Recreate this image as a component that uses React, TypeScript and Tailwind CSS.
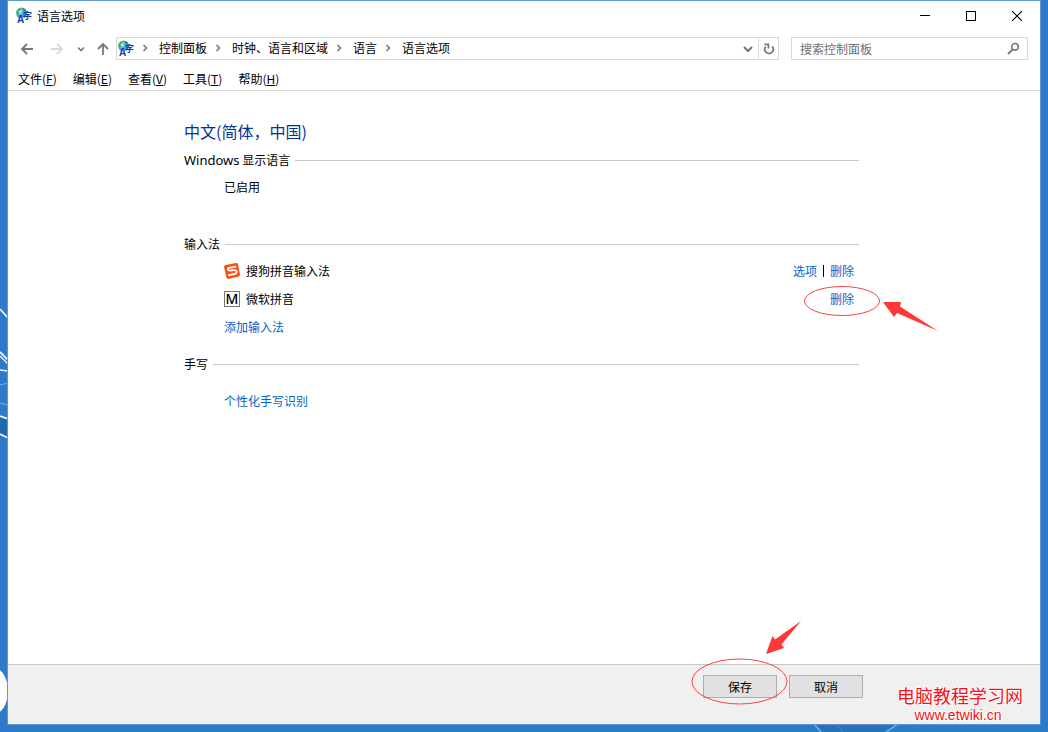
import type { ReactNode } from "react";

const crumbs = ["控制面板", "时钟、语言和区域", "语言", "语言选项"];

const menus = [
  { label: "文件", hotkey: "F" },
  { label: "编辑", hotkey: "E" },
  { label: "查看", hotkey: "V" },
  { label: "工具", hotkey: "T" },
  { label: "帮助", hotkey: "H" },
];

function LanguageIcon() {
  return (
    <svg viewBox="0 0 18 20" className="w-[18px] h-5 shrink-0 overflow-visible" aria-hidden="true">
      <defs>
        <radialGradient id="globe" cx="0.3" cy="0.35" r="0.75">
          <stop offset="0" stopColor="#e4f8fc" />
          <stop offset="0.45" stopColor="#58b4de" />
          <stop offset="1" stopColor="#1a5fb4" />
        </radialGradient>
      </defs>
      <circle cx="6.5" cy="7" r="5.5" fill="url(#globe)" />
      <path d="M1.4 6 Q2.8 2 6 2 L5.5 4 L3.6 5.4 L4.2 7.6 L2.6 9.6 Z" fill="#3fb05a" />
      <path d="M7.4 2 L10.6 3.4 L10.2 5.4 L8 4.8 Z" fill="#2f9a4c" />
      <path d="M5.4 9 L1.6 17.5 H9.4 L12 14 Z" fill="#fff" fillOpacity="0.8" />
      <text x="2" y="17.4" fontSize="10" fontWeight="bold" fill="#1438b0" fontFamily="Liberation Sans, sans-serif">A</text>
      <text x="8" y="13" fontSize="9" fontWeight="bold" fill="#1438b0" fontFamily="Noto Sans CJK SC, sans-serif">字</text>
    </svg>
  );
}

function SogouIcon() {
  return (
    <svg viewBox="0 0 16 16" className="w-4 h-4 shrink-0" aria-hidden="true">
      <path d="M1.6 2 L12.2 0.1 Q13.6 0 14 1.3 L16 11.7 Q16.1 13 14.8 13.5 L4.4 15.9 Q2.8 16 2.4 14.6 L0.1 4.2 Q0 2.5 1.6 2 Z" fill="#fb4f14" />
      <path d="M12.2 3.7 L6 4.6 Q3.5 5 3.8 6.4 Q4.1 7.7 6.3 7.5 L9.8 7.2 Q12.4 7.1 12.6 8.7 Q12.7 10.5 10.4 11 L4 12.3" fill="none" stroke="#fff" strokeWidth="1.8" />
    </svg>
  );
}

function Chevron({ down = false }: { down?: boolean }) {
  return (
    <svg viewBox="0 0 10 10" className="w-[10px] h-[10px]" fill="none" stroke="#777" strokeWidth="1.6" aria-hidden="true">
      <path d={down ? "M2 3.5 L5 6.5 L8 3.5" : "M3.5 2 L6.5 5 L3.5 8"} />
    </svg>
  );
}

function SectionTitle({ children }: { children: ReactNode }) {
  return (
    <div className="flex items-center gap-[5px] h-5">
      <h2>{children}</h2>
      <div className="flex-1 h-px bg-[#cbcbcb]" />
    </div>
  );
}

function Link({ children }: { children: ReactNode }) {
  return (
    <a href="#" className="text-[#0066cc] hover:underline">
      {children}
    </a>
  );
}

function TitleBar() {
  return (
    <header className="flex items-center justify-between h-[29px] pl-[7px]">
      <div className="flex items-center gap-1">
        <LanguageIcon />
        <h1>语言选项</h1>
      </div>
      <div className="flex h-full">
        <button aria-label="最小化" className="w-[46px] flex items-center justify-center">
          <svg viewBox="0 0 10 10" className="w-[10px] h-[10px]" stroke="#000" shapeRendering="crispEdges"><path d="M0 4.5 H10" /></svg>
        </button>
        <button aria-label="最大化" className="w-[46px] flex items-center justify-center">
          <svg viewBox="0 0 10 10" className="w-[10px] h-[10px]" fill="none" stroke="#000" shapeRendering="crispEdges"><path d="M0.5 0.5 H9.5 V9.5 H0.5 Z" /></svg>
        </button>
        <button aria-label="关闭" className="w-[46px] flex items-center justify-center">
          <svg viewBox="0 0 10 10" className="w-[10px] h-[10px]" stroke="#000" strokeWidth="1.1"><path d="M0 0 L10 10 M10 0 L0 10" /></svg>
        </button>
      </div>
    </header>
  );
}

function NavBar() {
  return (
    <nav className="flex items-center h-[37px] px-3">
      <div className="flex items-center w-24 h-full shrink-0">
        <button aria-label="后退" className="w-[14px]">
          <svg viewBox="0 0 14 14" className="w-[14px] h-[14px]" fill="none" stroke="#777" strokeWidth="1.8"><path d="M13 7 H2 M7 2 L2 7 L7 12" /></svg>
        </button>
        <button aria-label="前进" className="w-[14px] ml-4">
          <svg viewBox="0 0 14 14" className="w-[14px] h-[14px]" fill="none" stroke="#d8d8d8" strokeWidth="1.8"><path d="M1 7 H12 M7 2 L12 7 L7 12" /></svg>
        </button>
        <button aria-label="最近浏览的位置" className="w-[10px] ml-3">
          <Chevron down />
        </button>
        <button aria-label="上移" className="w-[14px] ml-[10px]">
          <svg viewBox="0 0 14 14" className="w-[14px] h-[14px]" fill="none" stroke="#777" strokeWidth="1.8"><path d="M7 13 V2 M2 7 L7 2 L12 7" /></svg>
        </button>
      </div>
      <div className="flex items-center flex-1 h-[23px] border border-[#d9d9d9]">
        <LanguageIcon />
        {crumbs.map((crumb) => (
          <div key={crumb} className="flex items-center pb-px pr-px">
            <span className="w-6 pl-[5px]"><Chevron /></span>
            <button>{crumb}</button>
          </div>
        ))}
        <button aria-label="以前的位置" className="ml-auto w-5 h-full flex items-center justify-center">
          <svg viewBox="0 0 10 10" className="w-[10px] h-[10px]" fill="none" stroke="#777" strokeWidth="2"><path d="M1 3 L5 7 L9 3" /></svg>
        </button>
        <button aria-label="刷新" className="w-5 h-full border-l border-[#d9d9d9] flex items-center justify-center">
          <svg viewBox="0 0 12 12" className="w-3 h-3" fill="none" stroke="#777" strokeWidth="1.7">
            <path d="M9.2 3.4 A4.2 4.2 0 1 1 2.6 3.8" />
            <path d="M1.4 1.4 H5.4 V5.4" />
          </svg>
        </button>
      </div>
      <div className="flex items-center w-[237px] h-[23px] ml-3 border border-[#d9d9d9] pl-2 pr-[7px]">
        <input
          type="text"
          aria-label="搜索控制面板"
          placeholder="搜索控制面板"
          className="flex-1 min-w-0 outline-none placeholder:text-[#6d6d6d]"
        />
        <svg viewBox="0 0 13 13" className="w-[13px] h-[13px]" fill="none" stroke="#777" aria-hidden="true">
          <circle cx="8" cy="4.8" r="3.3" strokeWidth="1.6" />
          <path d="M5.6 7.4 L1 12" strokeWidth="2" />
        </svg>
      </div>
    </nav>
  );
}

export default function App() {
  return (
    <div className="relative min-h-screen flex flex-col bg-[#2d7acb] px-[7px] pb-[7px] overflow-hidden font-['Noto_Sans_CJK_SC',sans-serif] text-xs text-black">
      {/* wallpaper strokes showing at the edges */}
      <svg viewBox="0 0 8 150" className="absolute left-0 top-[300px] w-2 h-[150px]" fill="none" stroke="#eef8ff" aria-hidden="true">
        <path d="M0 116 L8 119 V139 L0 134 Z" fill="#2468ac" stroke="none" />
        <path d="M0 9 L8 18 M0 52 L8 60 M0 116 L8 119 M0 134 L8 138" strokeWidth="1.8" />
        <path d="M0 56 L8 64 M0 70 L8 71" strokeWidth="1.3" />
        <path d="M0 85 L8 83 M0 103 L8 105" stroke="#79b0e6" />
      </svg>
      <svg viewBox="0 0 8 46" className="absolute left-0 bottom-[18px] w-2 h-[46px]" aria-hidden="true">
        <ellipse cx="-6" cy="23" rx="14" ry="23" fill="#fff" />
      </svg>
      <svg viewBox="0 0 90 8" className="absolute right-[146px] bottom-0 w-[90px] h-2" aria-hidden="true">
        <path d="M3 0 L13 8 H70 L84 0 Z" fill="#2a6fba" />
        <path d="M2 0 L9 8 M86 0 L74 8" stroke="#78aee2" strokeWidth="1.5" />
        <path d="M24 0 L31 8" stroke="#4c90d4" />
      </svg>

      <div className="relative flex-1 flex flex-col bg-white border border-[#6097d2]">
        <TitleBar />
        <NavBar />
        <div className="flex items-center gap-4 h-6 pl-[10px] border-b border-[#d9d9d9]">
          {menus.map((menu) => (
            <button key={menu.hotkey}>
              {menu.label}(<span className="underline">{menu.hotkey}</span>)
            </button>
          ))}
        </div>

        <main className="flex-1 pt-7 pl-[176px] pr-[181px]">
          <p className="text-base leading-6 text-[#003399]">中文(简体，中国)</p>

          <section className="mt-[7px]">
            <SectionTitle>
              <span className="font-['Noto_Sans',sans-serif] text-[13px] leading-4">Windows</span> 显示语言
            </SectionTitle>
            <p className="mt-[7px] pl-10 leading-5">已启用</p>
          </section>

          <section className="mt-[37px]">
            <SectionTitle>输入法</SectionTitle>
            <ul className="mt-[3px] pl-10 pr-[5px]">
              <li className="flex items-center h-7">
                <SogouIcon />
                <span className="ml-[6px]">搜狗拼音输入法</span>
                <span className="ml-auto flex items-center gap-[6px]">
                  <Link>选项</Link>
                  <span className="w-px h-3 bg-black" />
                  <Link>删除</Link>
                </span>
              </li>
              <li className="flex items-center h-7">
                <span className="w-4 h-4 border border-[#777] flex items-center justify-center font-['Noto_Sans',sans-serif] text-sm leading-none font-medium">M</span>
                <span className="ml-[6px]">微软拼音</span>
                <span className="relative ml-auto">
                  <Link>删除</Link>
                  <svg viewBox="0 0 136 48" className="absolute -left-[27px] -top-[6px] w-[136px] h-12 max-w-none pointer-events-none" aria-hidden="true">
                    <ellipse cx="39" cy="16" rx="37.5" ry="14.5" fill="none" stroke="#f04545" />
                    <path d="M80 17 L98 17 L97 21.5 L135 46 L94 28 L91 32 Z" fill="#fd3838" />
                  </svg>
                </span>
              </li>
              <li className="flex items-center h-7">
                <Link>添加输入法</Link>
              </li>
            </ul>
          </section>

          <section className="mt-[13px]">
            <SectionTitle>手写</SectionTitle>
            <p className="mt-[17px] pl-10 leading-5">
              <Link>个性化手写识别</Link>
            </p>
          </section>
        </main>

        <footer className="relative flex justify-end gap-3 h-[60px] pt-[10px] pr-[177px] bg-[#f0f0f0] border-t border-[#c8c8c8]">
          <div className="relative w-[74px] h-[23px]">
            <button className="w-full h-full bg-[#e1e1e1] border border-[#adadad]">保存</button>
            <svg viewBox="0 0 112 86" className="absolute -left-3 -top-[55px] w-[112px] h-[86px] max-w-none pointer-events-none" aria-hidden="true">
              <ellipse cx="48.5" cy="61.5" rx="47.5" ry="22.5" fill="none" stroke="#f04545" />
              <path d="M75 34 L81.5 16 L84 19.5 L110 1 L90.5 24.5 L93 28 Z" fill="#fd3838" />
            </svg>
          </div>
          <button className="w-[74px] h-[23px] bg-[#e1e1e1] border border-[#adadad]">取消</button>
          <div className="absolute right-[17px] bottom-0 text-center text-[#f8101c] [text-shadow:1px_0_#fff,-1px_0_#fff,0_1px_#fff,0_-1px_#fff]">
            <p className="text-lg leading-[22px]">电脑教程学习网</p>
            <p className="text-sm leading-[18px] pr-1 font-['Liberation_Sans',sans-serif]">www.etwiki.cn</p>
          </div>
        </footer>
      </div>
    </div>
  );
}
